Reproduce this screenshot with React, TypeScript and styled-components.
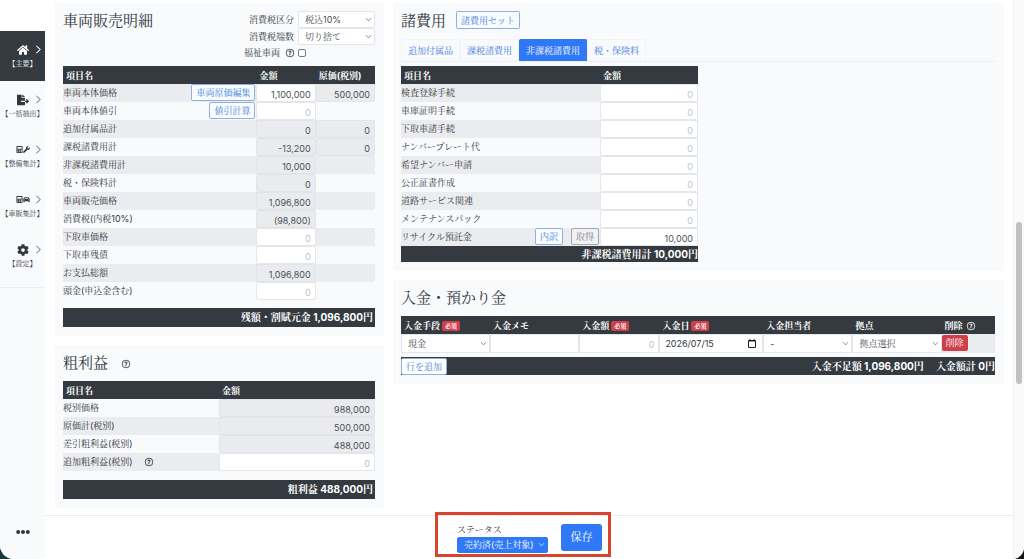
import React, { useState } from "react";
import styled, { createGlobalStyle, css } from "styled-components";
import {
  FaHome,
  FaFileExport,
  FaCalculator,
  FaWrench,
  FaCar,
  FaCog,
  FaEllipsisH,
} from "react-icons/fa";
import { BsChevronDown, BsChevronRight, BsQuestionCircle } from "react-icons/bs";

const color = {
  ink: "#33373c",
  value: "#4b5056",
  dark: "#343a40",
  panel: "#f8fafc",
  stripe: "#ebecef",
  line: "#e4e7ea",
  blue: "#2f79f7",
  link: "#4580dc",
  red: "#cf3f4b",
};

const GlobalStyle = createGlobalStyle`
  *, *::before, *::after { box-sizing: border-box; }
  body {
    margin: 0;
    background: linear-gradient(90deg, #17393a, #14160f);
    color: ${color.ink};
    font-family: Inter, "Noto Serif CJK JP", "Noto Sans CJK JP", sans-serif;
    font-size: 9px;
    line-height: 17px;
    overflow: hidden;
  }
  button, input, select { font: inherit; color: inherit; margin: 0; }
  button { cursor: pointer; }
`;

const Shell = styled.div`
  display: grid;
  grid-template-columns: 45px minmax(0, 1fr) 11px;
  height: 100vh;
  background: #fff;
  border-radius: 0 0 12px 14px;
  overflow: hidden;
`;

/* Side navigation */
const Sidebar = styled.aside`
  display: flex;
  flex-direction: column;
  border-top: 31px solid #fff;
  background: ${color.panel};
`;

const NavList = styled.nav`
  padding-bottom: 6px;
  border-bottom: 1px solid #eceef1;
`;

const NavItem = styled.a<{ $active?: boolean }>`
  display: grid;
  grid-template-columns: 1fr auto 1fr;
  grid-template-rows: 14px 13px;
  align-content: center;
  align-items: center;
  height: 50px;
  text-decoration: none;
  color: ${(p) => (p.$active ? "#fff" : color.ink)};
  background: ${(p) => (p.$active ? color.dark : "transparent")};
`;

const NavIcon = styled.span<{ $pair?: boolean }>`
  grid-column: 2;
  display: flex;
  align-items: center;
  justify-content: center;
  font-size: ${(p) => (p.$pair ? "7px" : "12px")};
`;

const NavArrow = styled.span<{ $active?: boolean }>`
  display: flex;
  justify-content: flex-end;
  padding-right: 2px;
  font-size: 9px;
  color: ${(p) => (p.$active ? "#fff" : "#85898e")};
  svg { stroke: currentColor; stroke-width: 1; }
`;

const NavLabel = styled.span`
  grid-column: 1 / -1;
  justify-self: center;
  font-size: 7px;
  line-height: 13px;
  white-space: nowrap;
`;

const MoreButton = styled.button`
  display: flex;
  justify-content: center;
  margin-top: auto;
  padding: 0 0 20px;
  border: 0;
  background: none;
  font-size: 14px;
`;

/* Main area */
const Main = styled.main`
  display: flex;
  flex-direction: column;
  min-width: 0;
`;

const Content = styled.div`
  flex: 1;
  display: grid;
  grid-template-columns: minmax(0, 7fr) minmax(0, 13fr);
  align-items: start;
  gap: 9px;
  min-height: 0;
  padding: 3px 9px 0 10px;
  overflow: hidden;
`;

const Column = styled.div`
  display: flex;
  flex-direction: column;
  gap: 9px;
`;

const Panel = styled.section`
  padding: 8px 9px 9px 8px;
  background: ${color.panel};
`;

const PanelHead = styled.header<{ $split?: boolean; $wide?: boolean }>`
  display: flex;
  align-items: flex-start;
  justify-content: ${(p) => (p.$split ? "space-between" : "flex-start")};
  gap: ${(p) => (p.$wide ? "14px" : "10px")};
  min-height: 22px;
  margin-bottom: 6px;
`;

const Title = styled.h2`
  margin: 0;
  font-size: 15px;
  font-weight: 400;
  line-height: 20px;
`;

const Help = styled(BsQuestionCircle)<{ $gap?: boolean }>`
  flex: none;
  align-self: center;
  font-size: 8px;
  stroke: currentColor;
  stroke-width: 0.5;
  overflow: visible;
  margin-left: ${(p) => (p.$gap ? "12px" : "0")};
`;

const TaxForm = styled.div`
  display: grid;
  grid-template-columns: auto 77px;
  grid-template-rows: 17px 17px 15px;
  column-gap: 4px;
  align-items: center;
`;

const FieldLabel = styled.label`
  display: flex;
  align-items: center;
  justify-content: flex-end;
  gap: 6px;
`;

const Check = styled.input`
  appearance: none;
  width: 8px;
  height: 8px;
  border: 1px solid #777b80;
  border-radius: 2px;
  background: #fff;
  &:checked { background: ${color.blue}; }
`;

const SelectWrap = styled.span<{ $tone?: "blue" }>`
  display: grid;
  grid-template-columns: minmax(0, 1fr) 9px;
  align-items: center;
  height: ${(p) => (p.$tone ? "16px" : "100%")};
  border: 1px solid ${(p) => (p.$tone ? color.blue : color.line)};
  border-radius: 2px;
  background: ${(p) => (p.$tone ? color.blue : "#fff")};
  color: ${(p) => (p.$tone ? "#fff" : color.value)};
  select {
    grid-area: 1 / 1 / 2 / 3;
    appearance: none;
    width: 100%;
    height: 100%;
    padding: 0 9px 0 6px;
    border: 0;
    background: transparent;
    line-height: 14px;
  }
  svg {
    grid-area: 1 / 2;
    font-size: 7px;
    pointer-events: none;
  }
`;

const Outline = styled.button<{ $tone?: "grey"; $tall?: boolean }>`
  height: ${(p) => (p.$tall ? "18px" : "17px")};
  padding: 0 4px;
  border: 1px solid ${(p) => (p.$tone ? "#a3a7ab" : "#8fb0dc")};
  border-radius: 2px;
  background: ${(p) => (p.$tone ? "#f0f1f2" : "#f8fbff")};
  color: ${(p) => (p.$tone ? "#7d8186" : color.link)};
  line-height: 15px;
  white-space: nowrap;
`;

/* Tables */
const Table = styled.table<{ $stripe: "odd" | "even"; $half?: boolean }>`
  width: ${(p) => (p.$half ? "50%" : "100%")};
  table-layout: fixed;
  border-collapse: collapse;
  th, td { padding: 0; vertical-align: top; }
  th {
    height: 18px;
    padding: 2px 0 0 3px;
    background: ${color.dark};
    color: #fff;
    font-weight: 700;
    line-height: 16px;
    text-align: left;
    white-space: nowrap;
  }
  tbody td { height: 18px; }
  tbody tr:nth-child(${(p) => p.$stripe}) { background: ${color.stripe}; }
`;

const Name = styled.div`
  display: flex;
  align-items: flex-start;
  height: 18px;
  padding-right: 1px;
  white-space: nowrap;
`;

const Actions = styled.span`
  display: flex;
  gap: 8px;
  margin-left: auto;
`;

const NameText = styled.label`
  line-height: 18px;
`;

const Value = styled.input<{ $align?: "left"; $tall?: boolean }>`
  display: block;
  width: 100%;
  height: ${(p) => (p.$tall ? "19px" : "18px")};
  padding: 2px 4px 0;
  border: 1px solid ${color.line};
  border-radius: 2px;
  background: #fff;
  color: ${color.value};
  text-align: ${(p) => p.$align ?? "right"};
  line-height: 14px;
  &::placeholder { color: #bfc3c8; opacity: 1; }
  &:read-only { background: #e9ebee; border-color: #e1e4e8; }
`;

const TotalBar = styled.div<{ $gap?: string; $half?: boolean; $height?: string }>`
  display: flex;
  align-items: center;
  justify-content: flex-end;
  gap: 12px;
  width: ${(p) => (p.$half ? "50%" : "100%")};
  height: ${(p) => p.$height ?? "19px"};
  margin-top: ${(p) => p.$gap ?? "0"};
  padding-right: ${(p) => (p.$height ? "0" : "2px")};
  background: ${color.dark};
  color: #fff;
  font-size: 10px;
  font-weight: 700;
  white-space: nowrap;
  ${Outline} {
    margin-right: auto;
    font-size: 9px;
    font-weight: 400;
    background: #fff;
  }
`;

/* Tabs */
const Tabs = styled.div`
  display: flex;
  margin-bottom: 4px;
  border-bottom: 1px solid #eceff3;
`;

const Tab = styled.button<{ $active: boolean }>`
  height: 22px;
  padding: 0 6px;
  border: 1px solid #f1f4f7;
  border-bottom: 0;
  border-radius: 2px 2px 0 0;
  background: transparent;
  color: ${color.link};
  ${(p) =>
    p.$active &&
    css`
      border-color: ${color.blue};
      background: ${color.blue};
      color: #fff;
    `}
`;

const Required = styled.span`
  display: inline-block;
  margin-left: 2px;
  padding: 0 3px;
  border-radius: 2px;
  background: ${color.red};
  font-size: 6px;
  line-height: 10px;
  vertical-align: 1px;
`;

const HeadFlex = styled.span`
  display: flex;
  align-items: center;
  gap: 4px;
`;

const SelectCell = styled.div`
  height: 19px;
`;

const DateField = styled.div`
  display: flex;
  align-items: center;
  height: 19px;
  padding-right: 6px;
  border: 1px solid ${color.line};
  background: #fff;
  input {
    flex: 1;
    min-width: 0;
    padding: 0 5px;
    border: 0;
    background: none;
    line-height: 15px;
  }
`;

const DeleteButton = styled.button`
  height: 16px;
  margin-top: 1px;
  padding: 0 4px;
  border: 0;
  border-radius: 2px;
  background: ${color.red};
  color: #fff;
  line-height: 16px;
`;

/* Footer */
const Footer = styled.footer`
  display: flex;
  align-items: flex-start;
  justify-content: center;
  height: 44px;
  padding-right: 12px;
  border-top: 1px solid #ebebed;
  background: #fff;
`;

const StatusBox = styled.div`
  display: flex;
  align-items: center;
  gap: 13px;
  height: 45px;
  margin-top: -4px;
  padding: 6px 6px 0 19px;
  border: 3px solid #d8452f;
`;

const StatusField = styled.div`
  display: grid;
  grid-template-rows: 14px 16px;
  width: 91px;
  label { line-height: 14px; }
`;

const SaveButton = styled.button`
  width: 41px;
  height: 27px;
  padding: 0;
  border: 0;
  border-radius: 3px;
  background: ${color.blue};
  color: #fff;
  font-size: 11px;
`;

/* Scroll track */
const Track = styled.div`
  display: flex;
  flex-direction: column;
  align-items: center;
  border-left: 1px solid #f0f0f0;
  background: #fafafa;
`;

const TrackSpace = styled.div<{ $grow: number }>`
  flex: ${(p) => p.$grow};
`;

const Thumb = styled.div`
  flex: 162;
  width: 6px;
  border-radius: 3px;
  background: #c1c1c1;
`;

const Select = ({
  id,
  options,
  label,
  tone,
}: {
  id: string;
  options: string[];
  label?: string;
  tone?: "blue";
}) => (
  <SelectWrap $tone={tone}>
    <select id={id} aria-label={label}>
      {options.map((o) => (
        <option key={o}>{o}</option>
      ))}
    </select>
    <BsChevronDown />
  </SelectWrap>
);

type Cell = { value?: string; edit?: boolean };
type Line = { name: string; amount: Cell; cost?: Cell; actions?: string[]; help?: boolean };

const saleLines: Line[] = [
  { name: "車両本体価格", amount: { value: "1,100,000", edit: true }, cost: { value: "500,000" }, actions: ["車両原価編集"] },
  { name: "車両本体値引", amount: { edit: true }, actions: ["値引計算"] },
  { name: "追加付属品計", amount: { value: "0" }, cost: { value: "0" } },
  { name: "課税諸費用計", amount: { value: "-13,200" }, cost: { value: "0" } },
  { name: "非課税諸費用計", amount: { value: "10,000" } },
  { name: "税・保険料計", amount: { value: "0" } },
  { name: "車両販売価格", amount: { value: "1,096,800" } },
  { name: "消費税(内税10%)", amount: { value: "(98,800)" } },
  { name: "下取車価格", amount: { edit: true } },
  { name: "下取車残債", amount: { edit: true } },
  { name: "お支払総額", amount: { value: "1,096,800" } },
  { name: "頭金(申込金含む)", amount: { edit: true } },
];

const profitLines: Line[] = [
  { name: "税別価格", amount: { value: "988,000" } },
  { name: "原価計(税別)", amount: { value: "500,000" } },
  { name: "差引粗利益(税別)", amount: { value: "488,000" } },
  { name: "追加粗利益(税別)", amount: { edit: true }, help: true },
];

const feeLines: Line[] = [
  "検査登録手続",
  "車庫証明手続",
  "下取車諸手続",
  "ナンバープレート代",
  "希望ナンバー申請",
  "公正証書作成",
  "道路サービス関連",
  "メンテナンスパック",
].map((name): Line => ({ name, amount: { edit: true } }));
feeLines.push({ name: "リサイクル預託金", amount: { value: "10,000", edit: true }, actions: ["内訳", "取得"] });

const LineRow = ({ line, id, withCost }: { line: Line; id: string; withCost?: boolean }) => (
  <tr>
    <td>
      <Name>
        <NameText htmlFor={id}>{line.name}</NameText>
        {line.help && <Help $gap />}
        {line.actions && (
          <Actions>
            {line.actions.map((a) => (
              <Outline key={a} type="button" $tone={a === "取得" ? "grey" : undefined}>
                {a}
              </Outline>
            ))}
          </Actions>
        )}
      </Name>
    </td>
    <td>
      <Value id={id} defaultValue={line.amount.value} placeholder="0" readOnly={!line.amount.edit} />
    </td>
    {withCost && (
      <td>
        {line.cost && <Value aria-label={`${line.name} 原価`} defaultValue={line.cost.value} readOnly />}
      </td>
    )}
  </tr>
);

const navItems = [
  { label: "【主要】", icon: <FaHome />, active: true },
  { label: "【一括抽出】", icon: <FaFileExport /> },
  { label: "【整備集計】", icon: <><FaCalculator /><FaWrench /></>, pair: true },
  { label: "【車販集計】", icon: <><FaCalculator /><FaCar /></>, pair: true },
  { label: "【設定】", icon: <FaCog /> },
];

const tabNames = ["追加付属品", "課税諸費用", "非課税諸費用", "税・保険料"];

export default function App() {
  const [tab, setTab] = useState(2);

  return (
    <>
      <GlobalStyle />
      <Shell lang="ja">
        <Sidebar>
          <NavList>
            {navItems.map((n) => (
              <NavItem key={n.label} href="#" $active={n.active}>
                <NavIcon $pair={n.pair}>{n.icon}</NavIcon>
                <NavArrow $active={n.active}>
                  <BsChevronRight />
                </NavArrow>
                <NavLabel>{n.label}</NavLabel>
              </NavItem>
            ))}
          </NavList>
          <MoreButton type="button" aria-label="その他">
            <FaEllipsisH />
          </MoreButton>
        </Sidebar>

        <Main>
          <Content>
            <Column>
              <Panel>
                <PanelHead $split>
                  <Title>車両販売明細</Title>
                  <TaxForm>
                    <FieldLabel htmlFor="tax-type">消費税区分</FieldLabel>
                    <Select id="tax-type" options={["税込10%", "税抜10%"]} />
                    <FieldLabel htmlFor="tax-round">消費税端数</FieldLabel>
                    <Select id="tax-round" options={["切り捨て", "切り上げ"]} />
                    <FieldLabel htmlFor="welfare">
                      福祉車両 <Help />
                    </FieldLabel>
                    <Check id="welfare" type="checkbox" />
                  </TaxForm>
                </PanelHead>
                <Table $stripe="odd">
                  <colgroup>
                    <col width="62%" />
                    <col width="19%" />
                    <col width="19%" />
                  </colgroup>
                  <thead>
                    <tr>
                      <th>項目名</th>
                      <th>金額</th>
                      <th>原価(税別)</th>
                    </tr>
                  </thead>
                  <tbody>
                    {saleLines.map((l, i) => (
                      <LineRow key={l.name} line={l} id={`sale-${i}`} withCost />
                    ))}
                  </tbody>
                </Table>
                <TotalBar $gap="8px">残額・割賦元金 1,096,800円</TotalBar>
              </Panel>

              <Panel>
                <PanelHead $wide>
                  <Title>粗利益</Title>
                  <Help />
                </PanelHead>
                <Table $stripe="even">
                  <thead>
                    <tr>
                      <th>項目名</th>
                      <th>金額</th>
                    </tr>
                  </thead>
                  <tbody>
                    {profitLines.map((l, i) => (
                      <LineRow key={l.name} line={l} id={`profit-${i}`} />
                    ))}
                  </tbody>
                </Table>
                <TotalBar $gap="9px">粗利益 488,000円</TotalBar>
              </Panel>
            </Column>

            <Column>
              <Panel>
                <PanelHead>
                  <Title>諸費用</Title>
                  <Outline type="button" $tall>
                    諸費用セット
                  </Outline>
                </PanelHead>
                <Tabs role="tablist">
                  {tabNames.map((t, i) => (
                    <Tab key={t} type="button" role="tab" aria-selected={i === tab} $active={i === tab} onClick={() => setTab(i)}>
                      {t}
                    </Tab>
                  ))}
                </Tabs>
                <Table $stripe="odd" $half>
                  <colgroup>
                    <col width="67%" />
                    <col width="33%" />
                  </colgroup>
                  <thead>
                    <tr>
                      <th>項目名</th>
                      <th>金額</th>
                    </tr>
                  </thead>
                  <tbody>
                    {feeLines.map((l, i) => (
                      <LineRow key={l.name} line={l} id={`fee-${i}`} />
                    ))}
                  </tbody>
                </Table>
                <TotalBar $half $height="16px">
                  非課税諸費用計 10,000円
                </TotalBar>
              </Panel>

              <Panel>
                <PanelHead>
                  <Title>入金・預かり金</Title>
                </PanelHead>
                <Table $stripe="odd">
                  <colgroup>
                    <col width="15%" />
                    <col width="15%" />
                    <col width="13.5%" />
                    <col width="17.5%" />
                    <col width="15%" />
                    <col width="15%" />
                    <col width="9%" />
                  </colgroup>
                  <thead>
                    <tr>
                      <th>入金手段<Required>必須</Required></th>
                      <th>入金メモ</th>
                      <th>入金額<Required>必須</Required></th>
                      <th>入金日<Required>必須</Required></th>
                      <th>入金担当者</th>
                      <th>拠点</th>
                      <th>
                        <HeadFlex>
                          削除 <Help />
                        </HeadFlex>
                      </th>
                    </tr>
                  </thead>
                  <tbody>
                    <tr>
                      <td>
                        <SelectCell><Select id="pay-method" label="入金手段" options={["現金", "振込"]} /></SelectCell>
                      </td>
                      <td><Value aria-label="入金メモ" $align="left" $tall /></td>
                      <td><Value aria-label="入金額" placeholder="0" $tall /></td>
                      <td>
                        <DateField>
                          <input aria-label="入金日" defaultValue="2026/07/15" />
                          <svg width="8" height="9" viewBox="0 0 8 9" fill="none" stroke="#222" aria-hidden="true">
                            <path d="M.5 1.5h7v7h-7z" />
                            <path d="M.5 2h7M2 0v2M6 0v2" />
                          </svg>
                        </DateField>
                      </td>
                      <td>
                        <SelectCell><Select id="pay-staff" label="入金担当者" options={["-"]} /></SelectCell>
                      </td>
                      <td>
                        <SelectCell><Select id="pay-site" label="拠点" options={["拠点選択"]} /></SelectCell>
                      </td>
                      <td><DeleteButton type="button">削除</DeleteButton></td>
                    </tr>
                  </tbody>
                </Table>
                <TotalBar $gap="4px" $height="18px">
                  <Outline type="button">行を追加</Outline>
                  <span>入金不足額 1,096,800円</span>
                  <span>入金額計 0円</span>
                </TotalBar>
              </Panel>
            </Column>
          </Content>

          <Footer>
            <StatusBox>
              <StatusField>
                <label htmlFor="status">ステータス</label>
                <Select id="status" tone="blue" options={["売約済(売上対象)", "商談中"]} />
              </StatusField>
              <SaveButton type="button">保存</SaveButton>
            </StatusBox>
          </Footer>
        </Main>

        <Track aria-hidden="true">
          <TrackSpace $grow={222} />
          <Thumb />
          <TrackSpace $grow={175} />
        </Track>
      </Shell>
    </>
  );
}
